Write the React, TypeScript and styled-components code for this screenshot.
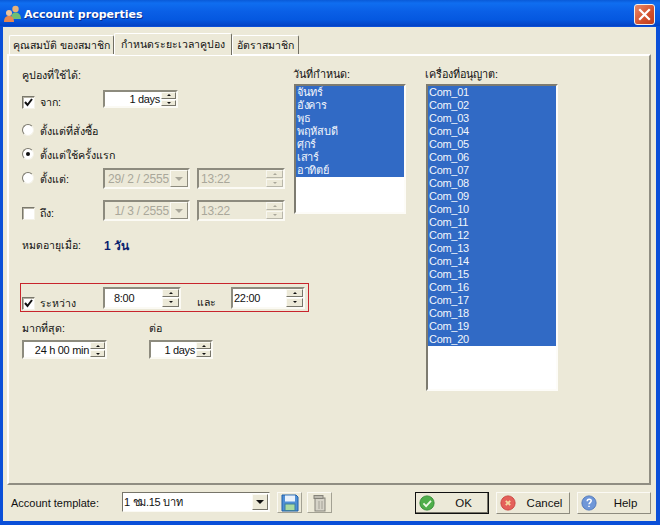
import React from 'react';
import styled, { createGlobalStyle } from 'styled-components';

const DAYS = ['จันทร์', 'อังคาร', 'พุธ', 'พฤหัสบดี', 'ศุกร์', 'เสาร์', 'อาทิตย์'];
const COMPUTERS = Array.from({ length: 20 }, (_, i) => `Com_${String(i + 1).padStart(2, '0')}`);

const App: React.FC = () => {
  return (
    <Window>
      <GlobalStyle />
      <TitleBar>
        <UsersIcon />
        <TitleText>Account properties</TitleText>
        <CloseButton>
          <svg width="13" height="13" viewBox="0 0 13 13">
            <path d="M2 2l9 9M11 2l-9 9" stroke="#fff" strokeWidth="2.2" strokeLinecap="square" />
          </svg>
        </CloseButton>
      </TitleBar>

      <Body>
        <TabStrip>
          <Tab $width={105}>คุณสมบัติ ของสมาชิก</Tab>
          <Tab $width={118} $active>กำหนดระยะเวลาคูปอง</Tab>
          <Tab $width={67}>อัตราสมาชิก</Tab>
        </TabStrip>

        <Panel>
          <LeftColumn>
            <Label $top={12}>คูปองที่ใช้ได้:</Label>

            <Row $top={8} $height={18}>
              <CheckSlot $drop={6}>
                <Check checked />
              </CheckSlot>
              <OptionText $width={68} $drop={7}>จาก:</OptionText>
              <SpinBox $width={75} $height={18} value="1 days" />
            </Row>

            <Row $top={14} $height={16}>
              <Radio />
              <OptionText $drop={2}>ตั้งแต่ที่สั่งซื้อ</OptionText>
            </Row>
            <Row $top={8} $height={16}>
              <Radio checked />
              <OptionText $drop={2}>ตั้งแต่ใช้ครั้งแรก</OptionText>
            </Row>

            <Row $top={6} $height={21}>
              <Radio />
              <OptionText $width={68} $drop={2}>ตั้งแต่:</OptionText>
              <DateField value="29/ 2 /  2555" />
              <TimeField value="13:22" />
            </Row>
            <Row $top={11} $height={21}>
              <CheckSlot $drop={6}>
                <Check />
              </CheckSlot>
              <OptionText $width={68} $drop={6}>ถึง:</OptionText>
              <DateField value="1/ 3 /  2555" />
              <TimeField value="13:22" />
            </Row>

            <Row $top={17} $height={14}>
              <ExpireLabel>หมดอายุเมื่อ:</ExpireLabel>
              <ExpireValue>1 วัน</ExpireValue>
            </Row>

            <RangeBox>
              <CheckSlot $drop={11}>
                <Check checked />
              </CheckSlot>
              <RangeText>ระหว่าง</RangeText>
              <SpinBox $width={78} $height={22} $left value="8:00" $indent={9} $wideArrows />
              <AndText>และ</AndText>
              <SpinBox $width={74} $height={22} $left value="22:00" $indent={1} $wideArrows />
            </RangeBox>

            <LimitGrid>
              <Label>มากที่สุด:</Label>
              <Label>ต่อ</Label>
              <SpinBox $width={85} $height={19} value="24 h 00 min" />
              <SpinBox $width={64} $height={19} value="1 days" />
            </LimitGrid>
          </LeftColumn>

          <ListColumn $left={8}>
            <ListLabel>วันที่กำหนด:</ListLabel>
            <ListBox $width={112} $height={130}>
              {DAYS.map((day) => (
                <ListItem key={day}>{day}</ListItem>
              ))}
            </ListBox>
          </ListColumn>

          <ListColumn $left={20}>
            <ListLabel>เครื่องที่อนุญาต:</ListLabel>
            <ListBox $width={132} $height={307}>
              {COMPUTERS.map((name) => (
                <ListItem key={name}>{name}</ListItem>
              ))}
            </ListBox>
          </ListColumn>
        </Panel>

        <Footer>
          <TemplateLabel>Account template:</TemplateLabel>
          <Combo>
            <ComboText>1 ชม.15 บาท</ComboText>
            <ComboArrow>
              <Triangle />
            </ComboArrow>
          </Combo>
          <IconButton $left={7}>
            <svg width="18" height="18" viewBox="0 0 18 18">
              <path d="M1 1h14l2 2v14H1z" fill="#4f8fd6" stroke="#1f5ea8" />
              <rect x="4" y="1.5" width="10" height="6" fill="#e8f1fb" />
              <rect x="4" y="10" width="10" height="6.5" fill="#a9d9a0" stroke="#3d7f9d" />
            </svg>
          </IconButton>
          <IconButton $left={5}>
            <svg width="14" height="18" viewBox="0 0 14 18">
              <rect x="2" y="4" width="10" height="13" fill="#d6d3c8" stroke="#85837a" />
              <rect x="1" y="1.5" width="9" height="3" fill="#bdbab0" stroke="#85837a" />
              <path d="M6 7v8M9 7v8" stroke="#a5a298" />
            </svg>
          </IconButton>

          <ActionGroup>
            <ActionButton $default>
              <StatusIcon $color="#4fae4a" $edge="#2f8a32">
                <path d="M5 9.500l3 3 5.500-6" fill="none" stroke="#eef9e6" strokeWidth="2" />
              </StatusIcon>
              <ActionText>OK</ActionText>
            </ActionButton>
            <ActionButton>
              <StatusIcon $color="#e4605a" $edge="#c9403c">
                <path d="M6.500 6.500l5 5M11.500 6.500l-5 5" fill="none" stroke="#f4d9a0" strokeWidth="2" />
              </StatusIcon>
              <ActionText>Cancel</ActionText>
            </ActionButton>
            <ActionButton>
              <StatusIcon $color="#6f97d8" $edge="#4c74b8">
                <path d="M7 7c0-3 4.500-3 4.500-.4 0 1.900-2.500 1.900-2.500 3.900M9 12v1.500" fill="none" stroke="#fff" strokeWidth="1.700" />
              </StatusIcon>
              <ActionText>Help</ActionText>
            </ActionButton>
          </ActionGroup>
        </Footer>
      </Body>
    </Window>
  );
};

export default App;

/* Small drawn parts */

const UsersIcon = () => (
  <svg width="20" height="20" viewBox="0 0 20 20">
    <circle cx="12.500" cy="5" r="3.200" fill="#e8b27a" />
    <path d="M8 15c0-5 2-6.500 4.500-6.500S18 10 18 15z" fill="#6fbf73" />
    <circle cx="6" cy="9" r="3" fill="#f0c49a" />
    <path d="M1 18c0-4.500 2-6 5-6s5 1.500 5 6z" fill="#e8864f" />
  </svg>
);

const Check: React.FC<{ checked?: boolean }> = ({ checked }) => (
  <CheckBox>
    {checked && (
      <svg width="11" height="11" viewBox="0 0 11 11">
        <path d="M2 5l2.500 3L9 2" fill="none" stroke="#111" strokeWidth="2" />
      </svg>
    )}
  </CheckBox>
);

const Radio: React.FC<{ checked?: boolean }> = ({ checked }) => (
  <RadioSlot>
    <RadioCircle>{checked && <RadioDot />}</RadioCircle>
  </RadioSlot>
);

const Spinners: React.FC<{ $disabled?: boolean; $wide?: boolean }> = ({ $disabled, $wide }) => (
  <SpinStack $wide={$wide}>
    <SpinPart $disabled={$disabled}>
      <UpArrow $disabled={$disabled} />
    </SpinPart>
    <SpinPart $disabled={$disabled}>
      <DownArrow $disabled={$disabled} />
    </SpinPart>
  </SpinStack>
);

type SpinBoxProps = {
  value: string;
  $width: number;
  $height: number;
  $left?: boolean;
  $indent?: number;
  $wideArrows?: boolean;
};

const SpinBox: React.FC<SpinBoxProps> = ({ value, $width, $height, $left, $indent, $wideArrows }) => (
  <Field $width={$width} $height={$height}>
    <FieldText $left={$left} $indent={$indent}>{value}</FieldText>
    <Spinners $wide={$wideArrows} />
  </Field>
);

const DateField: React.FC<{ value: string }> = ({ value }) => (
  <Field $width={87} $height={21} $disabled>
    <FieldText $disabled>{value}</FieldText>
    <DateArrow>
      <Triangle $disabled />
    </DateArrow>
  </Field>
);

const TimeField: React.FC<{ value: string }> = ({ value }) => (
  <TimeWrap>
    <Field $width={88} $height={21} $disabled>
      <FieldText $left $disabled $indent={2}>{value}</FieldText>
      <Spinners $disabled $wide />
    </Field>
  </TimeWrap>
);

const StatusIcon: React.FC<{ $color: string; $edge: string; children: React.ReactNode }> = ({ $color, $edge, children }) => (
  <svg width="16" height="16" viewBox="0 0 18 18">
    <circle cx="9" cy="9" r="8" fill={$color} stroke={$edge} />
    {children}
  </svg>
);

/* Styles */

const GlobalStyle = createGlobalStyle`
  html, body {
    margin: 0;
    padding: 0;
    background: #ece9d8;
  }
  body {
    font-family: "Liberation Sans", "Noto Sans", sans-serif;
    font-size: 12px;
    color: #111;
  }
`;

const Window = styled.div`
  width: 660px;
  height: 525px;
  display: flex;
  flex-direction: column;
  overflow: hidden;
  background: #0a4fd8;
`;

const TitleBar = styled.div`
  height: 26px;
  flex: none;
  box-sizing: border-box;
  display: flex;
  align-items: center;
  padding: 2px 5px 0 3px;
  background: linear-gradient(180deg, #0a5ad8 0%, #0f6ef0 12%, #0a5fe6 45%, #0558e0 75%, #0342c4 100%);
`;

const TitleText = styled.div`
  margin-left: 1px;
  font-family: "DejaVu Sans", sans-serif;
  font-weight: bold;
  font-size: 11px;
  color: #fff;
  text-shadow: 1px 1px 0 #0a2c8c;
`;

const CloseButton = styled.div`
  width: 19px;
  height: 19px;
  margin-left: auto;
  display: flex;
  align-items: center;
  justify-content: center;
  border: 1px solid #f4f0ea;
  border-radius: 3px;
  background: linear-gradient(135deg, #e88a6c, #d2502c 60%, #c03c1c);
`;

const Body = styled.div`
  flex: 1;
  display: flex;
  flex-direction: column;
  min-height: 0;
  margin: 1px 4px 4px 3px;
  padding: 0 5px 0 4px;
  background: #ece9d8;
`;

const TabStrip = styled.div`
  height: 27px;
  flex: none;
  display: flex;
  align-items: flex-end;
  padding-left: 2px;
`;

const Tab = styled.div<{ $width: number; $active?: boolean }>`
  width: ${(p) => p.$width}px;
  height: ${(p) => (p.$active ? 22 : 19)}px;
  display: flex;
  align-items: center;
  justify-content: center;
  box-sizing: border-box;
  white-space: nowrap;
  font-size: 10.500px;
  border-top: 1px solid #fff;
  border-left: 1px solid #fff;
  border-right: 1px solid #716f64;
  border-radius: 2px 2px 0 0;
  position: relative;
  z-index: ${(p) => (p.$active ? 1 : 0)};
  margin-bottom: ${(p) => (p.$active ? -1 : 0)}px;
  background: #ece9d8;
`;

const Panel = styled.div`
  height: 431px;
  flex: none;
  box-sizing: border-box;
  display: flex;
  align-items: flex-start;
  padding-left: 13px;
  border-top: 2px solid #fff;
  border-left: 2px solid #fff;
  border-right: 2px solid #8f8d82;
  border-bottom: 2px solid #8f8d82;
`;

const LeftColumn = styled.div`
  width: 264px;
  flex: none;
  display: flex;
  flex-direction: column;
`;

const Label = styled.div<{ $top?: number }>`
  height: 14px;
  line-height: 14px;
  margin-top: ${(p) => p.$top ?? 0}px;
  white-space: nowrap;
  font-size: 10.700px;
`;

const Row = styled.div<{ $top: number; $height: number }>`
  display: flex;
  align-items: center;
  height: ${(p) => p.$height}px;
  margin-top: ${(p) => p.$top}px;
`;

const CheckSlot = styled.div<{ $drop: number }>`
  flex: none;
  padding-top: ${(p) => p.$drop}px;
`;

const CheckBox = styled.div`
  width: 13px;
  height: 13px;
  flex: none;
  display: flex;
  align-items: center;
  justify-content: center;
  box-sizing: border-box;
  background: #fff;
  border: 1px solid;
  border-color: #7a786c #f4f2e8 #f4f2e8 #7a786c;
  box-shadow: inset 1px 1px 0 #b5b2a4;
`;

const RadioSlot = styled.div`
  width: 13px;
  height: 13px;
  flex: none;
`;

const RadioCircle = styled.div`
  width: 12px;
  height: 12px;
  box-sizing: border-box;
  display: flex;
  align-items: center;
  justify-content: center;
  border-radius: 50%;
  background: #fff;
  border: 1px solid;
  border-color: #7a786c #f4f2e8 #f4f2e8 #7a786c;
`;

const RadioDot = styled.div`
  width: 4px;
  height: 4px;
  border-radius: 50%;
  background: #111;
`;

const OptionText = styled.div<{ $width?: number; $drop?: number }>`
  width: ${(p) => (p.$width ? `${p.$width}px` : 'auto')};
  flex: none;
  box-sizing: border-box;
  padding-left: 5px;
  padding-top: ${(p) => p.$drop ?? 0}px;
  white-space: nowrap;
  font-size: 10.700px;
`;

const Field = styled.div<{ $width: number; $height: number; $disabled?: boolean }>`
  width: ${(p) => p.$width}px;
  height: ${(p) => p.$height}px;
  flex: none;
  display: flex;
  align-items: center;
  box-sizing: border-box;
  background: ${(p) => (p.$disabled ? '#ece9d8' : '#fff')};
  border: 2px solid;
  border-color: #8d8b7e #fbfaf4 #fbfaf4 #8d8b7e;
`;

const FieldText = styled.div<{ $left?: boolean; $indent?: number; $disabled?: boolean }>`
  flex: 1;
  min-width: 0;
  white-space: nowrap;
  font-size: ${(p) => (p.$disabled ? 12 : 11)}px;
  letter-spacing: ${(p) => (p.$disabled ? -0.2 : -0.3)}px;
  text-align: ${(p) => (p.$left ? 'left' : 'right')};
  padding: 0 1px 0 ${(p) => p.$indent ?? 0}px;
  color: ${(p) => (p.$disabled ? '#a9a79a' : '#111')};
`;

const SpinStack = styled.div<{ $wide?: boolean }>`
  width: ${(p) => (p.$wide ? 17 : 15)}px;
  flex: none;
  align-self: stretch;
  display: flex;
  flex-direction: column;
  gap: 1px;
`;

const SpinPart = styled.div<{ $disabled?: boolean }>`
  flex: 1;
  display: flex;
  align-items: center;
  justify-content: center;
  background: #ece9d8;
  border: 1px solid;
  border-color: ${(p) => (p.$disabled ? '#f8f7f0 #b9b7aa #b9b7aa #f8f7f0' : '#fbfaf4 #77756a #77756a #fbfaf4')};
`;

const UpArrow = styled.div<{ $disabled?: boolean }>`
  width: 0;
  height: 0;
  border-left: 2px solid transparent;
  border-right: 2px solid transparent;
  border-bottom: 2px solid ${(p) => (p.$disabled ? '#a9a79a' : '#111')};
`;

const DownArrow = styled.div<{ $disabled?: boolean }>`
  width: 0;
  height: 0;
  border-left: 2px solid transparent;
  border-right: 2px solid transparent;
  border-top: 2px solid ${(p) => (p.$disabled ? '#a9a79a' : '#111')};
`;

const DateArrow = styled.div`
  width: 16px;
  flex: none;
  align-self: stretch;
  display: flex;
  align-items: center;
  justify-content: center;
  background: #ece9d8;
  border: 1px solid;
  border-color: #fbfaf4 #8d8b7e #8d8b7e #fbfaf4;
`;

const Triangle = styled.div<{ $disabled?: boolean }>`
  width: 0;
  height: 0;
  border-left: 4px solid transparent;
  border-right: 4px solid transparent;
  border-top: 4px solid ${(p) => (p.$disabled ? '#a9a79a' : '#111')};
`;

const TimeWrap = styled.div`
  margin-left: 7px;
  flex: none;
`;

const ExpireLabel = styled.div`
  width: 82px;
  flex: none;
  font-size: 10.500px;
  white-space: nowrap;
`;

const ExpireValue = styled.div`
  font-weight: bold;
  font-size: 12px;
  color: #0a1f6e;
`;

const RangeBox = styled.div`
  width: 289px;
  height: 29px;
  margin: 31px 0 0 -2px;
  flex: none;
  box-sizing: border-box;
  display: flex;
  align-items: center;
  padding-left: 1px;
  border: 1px solid #c8242c;
`;

const RangeText = styled.div`
  width: 68px;
  flex: none;
  box-sizing: border-box;
  padding-left: 5px;
  padding-top: 11px;
  font-size: 10.500px;
  white-space: nowrap;
`;

const AndText = styled.div`
  width: 50px;
  flex: none;
  text-align: center;
  padding-top: 9px;
  box-sizing: border-box;
  font-size: 10.500px;
`;

const LimitGrid = styled.div`
  display: grid;
  grid-template-columns: 127px auto;
  justify-content: start;
  row-gap: 5px;
  margin-top: 9px;
`;

const ListColumn = styled.div<{ $left: number }>`
  margin: 11px 0 0 ${(p) => p.$left}px;
  flex: none;
  display: flex;
  flex-direction: column;
`;

const ListLabel = styled.div`
  height: 14px;
  line-height: 14px;
  margin-left: -1px;
  white-space: nowrap;
  font-size: 10.800px;
`;

const ListBox = styled.div<{ $width: number; $height: number }>`
  width: ${(p) => p.$width}px;
  height: ${(p) => p.$height}px;
  margin-top: 3px;
  box-sizing: border-box;
  background: #fff;
  border: 2px solid;
  border-color: #7d7b70 #fdfcf8 #fdfcf8 #7d7b70;
  overflow: hidden;
`;

const ListItem = styled.div`
  height: 13px;
  line-height: 13px;
  padding-left: 1px;
  font-size: 11px;
  letter-spacing: -0.300px;
  color: #f2f6fc;
  background: #316ac5;
  white-space: nowrap;
`;

const Footer = styled.div`
  flex: 1;
  display: flex;
  align-items: flex-start;
  padding: 7px 0 0 4px;
`;

const TemplateLabel = styled.div`
  width: 111px;
  flex: none;
  padding-top: 5px;
  font-size: 11px;
`;

const Combo = styled.div`
  width: 148px;
  height: 20px;
  flex: none;
  display: flex;
  align-items: center;
  box-sizing: border-box;
  background: #fff;
  border: 1px solid;
  border-color: #77756a #fbfaf4 #fbfaf4 #77756a;
`;

const ComboText = styled.div`
  flex: 1;
  padding-left: 1px;
  font-size: 11px;
  letter-spacing: -0.300px;
  white-space: nowrap;
`;

const ComboArrow = styled.div`
  width: 16px;
  height: 16px;
  margin-right: 1px;
  flex: none;
  display: flex;
  align-items: center;
  justify-content: center;
  box-sizing: border-box;
  background: #ece9d8;
  border: 1px solid;
  border-color: #fbfaf4 #77756a #77756a #fbfaf4;
`;

const IconButton = styled.div<{ $left: number }>`
  width: 25px;
  height: 21px;
  flex: none;
  margin-left: ${(p) => p.$left}px;
  display: flex;
  align-items: center;
  justify-content: center;
  box-sizing: border-box;
  border: 1px solid;
  border-color: #fbfaf4 #a3a193 #a3a193 #fbfaf4;
`;

const ActionGroup = styled.div`
  margin-left: auto;
  display: flex;
  gap: 7px;
`;

const ActionButton = styled.div<{ $default?: boolean }>`
  width: 74px;
  height: 22px;
  flex: none;
  display: flex;
  align-items: center;
  box-sizing: border-box;
  padding-left: 3px;
  border: 1px solid;
  border-color: ${(p) => (p.$default ? '#111' : '#fbfaf4 #8d8b7e #8d8b7e #fbfaf4')};
  box-shadow: ${(p) => (p.$default ? 'inset -1px -1px 0 #77756a' : 'none')};
`;

const ActionText = styled.div`
  flex: 1;
  text-align: center;
  padding-left: 4px;
  font-size: 11.500px;
`;
